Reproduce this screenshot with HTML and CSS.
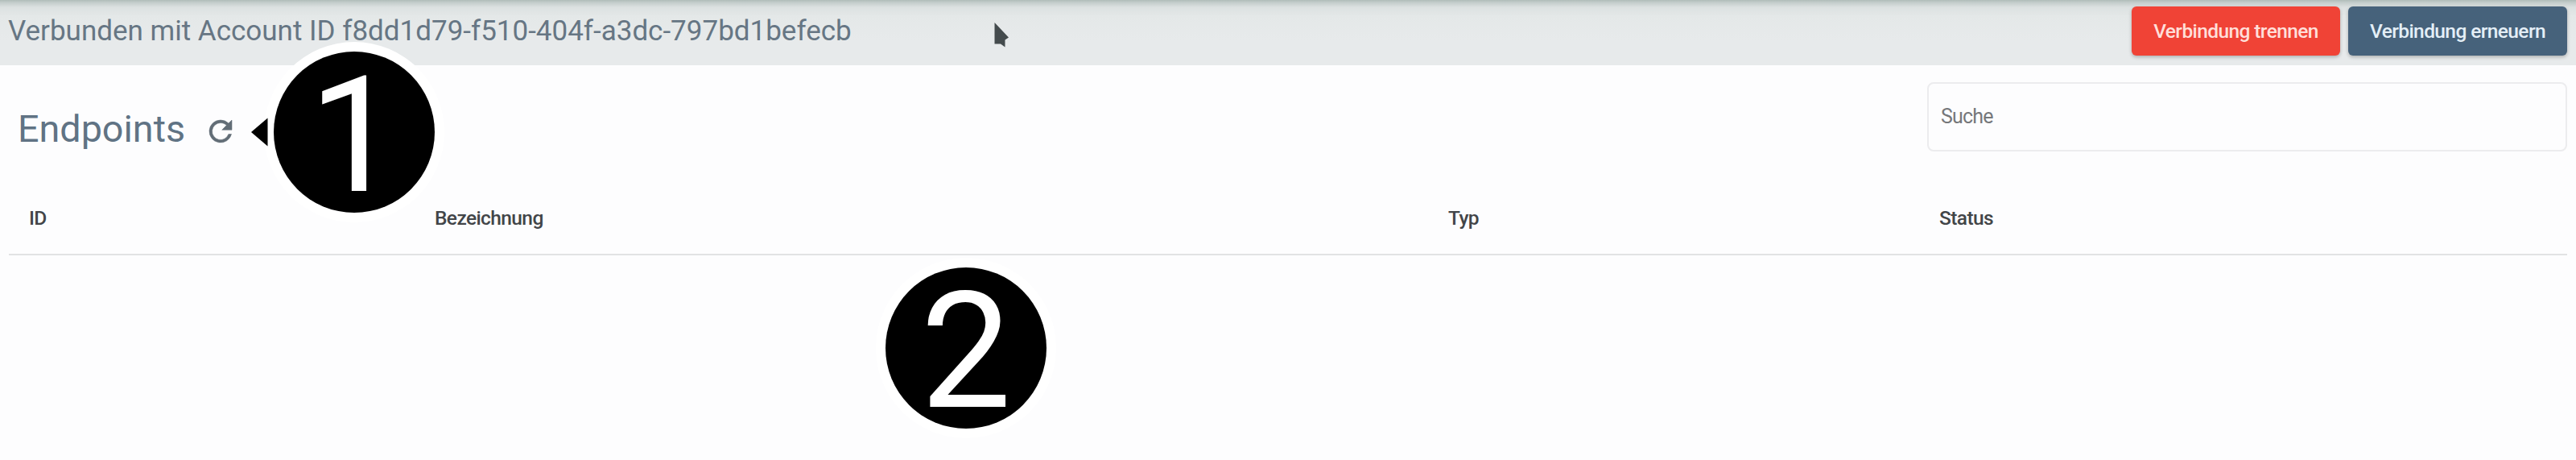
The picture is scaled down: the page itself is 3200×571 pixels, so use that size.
FILE: index.html
```html
<!DOCTYPE html>
<html lang="de">
<head>
<meta charset="utf-8">
<title>Endpoints</title>
<link rel="stylesheet" href="styles.css">
</head>
<body>
<header class="bar">
  <h1 class="account">Verbunden mit Account ID f8dd1d79-f510-404f-a3dc-797bd1befecb</h1>
  <div class="actions">
    <button class="btn btn-danger">Verbindung trennen</button>
    <button class="btn btn-primary">Verbindung erneuern</button>
  </div>
</header>
<main class="content">
  <section class="toolbar">
    <div class="heading">
      <h2 class="title">Endpoints</h2>
      <svg class="refresh" viewBox="0 0 24 24"><path d="M17.65 6.35A7.96 7.96 0 0 0 12 4a8 8 0 1 0 7.73 10h-2.08A6 6 0 1 1 12 6c1.66 0 3.14.69 4.22 1.78L13 11h7V4z"/></svg>
    </div>
    <input class="search" type="text" placeholder="Suche">
  </section>
  <table class="grid">
    <colgroup><col class="c-id"><col class="c-name"><col class="c-type"><col></colgroup>
    <thead><tr><th>ID</th><th>Bezeichnung</th><th>Typ</th><th>Status</th></tr></thead>
  </table>
</main>
<svg class="cursor" viewBox="0 0 18 31"><path d="M0.500 0L18 18.500L13.500 21.500L13.500 30.500L8 26.500L0.500 26.500Z"/></svg>
<div class="marker marker-one">1</div>
<svg class="pointer" viewBox="0 0 21 36"><path d="M0 18L20.500 0.500V35.500Z"/></svg>
<div class="marker marker-two">2</div>
</body>
</html>
```
FILE: styles.css
```css
* { box-sizing: border-box; }
body {
  margin: 0;
  height: 571px;
  overflow: hidden;
  position: relative;
  background: #fdfdfe;
  color: #424548;
  font-family: Roboto, sans-serif;
}
.bar {
  display: flex;
  justify-content: space-between;
  align-items: flex-start;
  height: 81px;
  padding: 8px 11px 0 10px;
  background: linear-gradient(#afbcb8 0, #c3cccb 3px, #dce1e1 9px, #e4e8e8 20px, #e7eaeb 50px);
}
.account {
  margin: 10px 0 0;
  font-size: 35px;
  line-height: 41px;
  font-weight: 400;
  color: #667684;
  white-space: nowrap;
}
.actions { display: flex; gap: 10px; }
.btn {
  height: 61px;
  padding: 0;
  border: 0;
  border-radius: 6px;
  font: 500 24.5px/30px Roboto, sans-serif;
  letter-spacing: -.6px;
  box-shadow: 0 2px 4px rgba(0, 0, 0, .25);
}
.btn-danger { width: 259px; background: #f04336; color: #ffdfd9; }
.btn-primary { width: 272px; background: #46627b; color: #e4eff7; }
.toolbar {
  display: flex;
  justify-content: space-between;
  align-items: flex-start;
  height: 136px;
  padding: 21px 11px 0 22px;
}
.heading { display: flex; align-items: center; gap: 23px; padding-top: 30px; }
.title {
  margin: 0;
  font-size: 46.700px;
  line-height: 56px;
  font-weight: 400;
  color: #607384;
}
.refresh { width: 42px; height: 42px; margin-top: 5px; fill: #626d76; stroke: #626d76; stroke-width: .3; }
.search {
  width: 795px;
  height: 86px;
  padding: 0 15px 2px;
  border: 2px solid #ececee;
  border-radius: 8px;
  background: #fdfdfe;
  font: 400 25px/30px Roboto, sans-serif;
  letter-spacing: -.8px;
}
.search::placeholder { color: #75777a; opacity: 1; }
.grid {
  width: 3178px;
  margin-left: 11px;
  table-layout: fixed;
  border-collapse: separate;
  border-spacing: 0;
}
.c-id { width: 504px; }
.c-name { width: 1259px; }
.c-type { width: 610px; }
.grid th {
  height: 100px;
  padding: 9px 0 0 25px;
  border-bottom: 2px solid #e2e3e4;
  text-align: left;
  font-size: 24.500px;
  line-height: 30px;
  font-weight: 500;
  letter-spacing: -.6px;
}
.cursor {
  position: absolute;
  left: 1235px;
  top: 28px;
  width: 18px;
  height: 31px;
  fill: #444b4d;
}
.marker {
  position: absolute;
  width: 200px;
  height: 200px;
  border-radius: 50%;
  background: #000;
  box-shadow: 0 0 0 12px #fff;
  color: #fff;
  font-size: 201px;
  line-height: 210px;
  text-align: center;
}
.marker-one { left: 340px; top: 64px; }
.marker-two { left: 1100px; top: 332px; }
.pointer { position: absolute; left: 312px; top: 146px; width: 21px; height: 36px; }
```
